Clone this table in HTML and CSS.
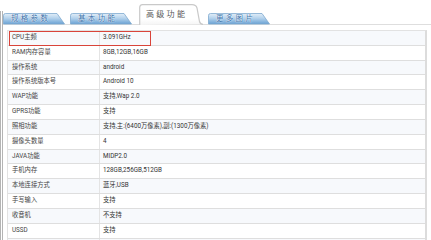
FILE: index.html
```html
<!DOCTYPE html>
<html lang="zh-CN">
<head>
<meta charset="utf-8">
<title>高级功能</title>
<link rel="stylesheet" href="styles.css">
</head>
<body>
<svg class="defs" width="0" height="0" aria-hidden="true">
  <defs>
    <linearGradient id="tabGrad" x1="0" y1="0" x2="0" y2="1">
      <stop offset="0" stop-color="#e2eef8"/>
      <stop offset="0.45" stop-color="#b4d2ec"/>
      <stop offset="1" stop-color="#6aa2d4"/>
    </linearGradient>
    <linearGradient id="activeGrad" x1="0" y1="0" x2="0" y2="1">
      <stop offset="0" stop-color="#ffffff"/>
      <stop offset="0.7" stop-color="#ffffff"/>
      <stop offset="1" stop-color="#f4f4f4"/>
    </linearGradient>
  </defs>
</svg>
<div class="frame">
  <div class="tabs">
    <div class="tab">
      <svg class="tab-bg" viewBox="0 0 62 11" preserveAspectRatio="none"><path d="M0.5,11 L0.5,2.5 Q0.5,0.5 2.5,0.5 L54,0.5 L61.5,11 Z" fill="url(#tabGrad)" stroke="#7fa9cf" stroke-width="0.8"/></svg>
      <span class="tab-text">规格参数</span>
    </div>
    <div class="tab">
      <svg class="tab-bg" viewBox="0 0 62 11" preserveAspectRatio="none"><path d="M0.5,11 L0.5,2.5 Q0.5,0.5 2.5,0.5 L54,0.5 L61.5,11 Z" fill="url(#tabGrad)" stroke="#7fa9cf" stroke-width="0.8"/></svg>
      <span class="tab-text">基本功能</span>
    </div>
    <div class="tab tab-active">
      <svg class="tab-bg" viewBox="0 0 64 21" preserveAspectRatio="none"><path d="M0.7,21 L0.7,3.5 Q0.7,0.7 3.5,0.7 L53,0.7 Q57,0.7 58,4 L60.5,17.5 Q61.3,20.3 64,20.3" fill="url(#activeGrad)" stroke="#c9c9c9" stroke-width="1.2"/></svg>
      <span class="tab-text">高级功能</span>
    </div>
    <div class="tab">
      <svg class="tab-bg" viewBox="0 0 62 11" preserveAspectRatio="none"><path d="M0.5,11 L0.5,2.5 Q0.5,0.5 2.5,0.5 L54,0.5 L61.5,11 Z" fill="url(#tabGrad)" stroke="#7fa9cf" stroke-width="0.8"/></svg>
      <span class="tab-text">更多图片</span>
    </div>
  </div>
  <div class="table">
    <div class="row hl"><div class="k">CPU主频</div><div class="v">3.091GHz</div><div class="mark"></div></div>
    <div class="row"><div class="k">RAM内存容量</div><div class="v">8GB,12GB,16GB</div></div>
    <div class="row"><div class="k">操作系统</div><div class="v">android</div></div>
    <div class="row"><div class="k">操作系统版本号</div><div class="v">Android 10</div></div>
    <div class="row"><div class="k">WAP功能</div><div class="v">支持,Wap 2.0</div></div>
    <div class="row"><div class="k">GPRS功能</div><div class="v">支持</div></div>
    <div class="row"><div class="k">照相功能</div><div class="v">支持,主:(6400万像素),副:(1300万像素)</div></div>
    <div class="row"><div class="k">摄像头数量</div><div class="v">4</div></div>
    <div class="row"><div class="k">JAVA功能</div><div class="v">MIDP2.0</div></div>
    <div class="row"><div class="k">手机内存</div><div class="v">128GB,256GB,512GB</div></div>
    <div class="row"><div class="k">本地连接方式</div><div class="v">蓝牙,USB</div></div>
    <div class="row"><div class="k">手写输入</div><div class="v">支持</div></div>
    <div class="row"><div class="k">收音机</div><div class="v">不支持</div></div>
    <div class="row"><div class="k">USSD</div><div class="v">支持</div></div>
    <div class="row"><div class="k"></div><div class="v"></div></div>
  </div>
</div>
</body>
</html>
```
FILE: styles.css
```css
html, body {
  margin: 0;
  padding: 0;
  background: #ffffff;
  overflow: hidden;
}
body {
  font-family: Roboto, "Noto Sans CJK SC", sans-serif;
  width: 431px;
  height: 240px;
}
.defs {
  position: absolute;
  width: 0;
  height: 0;
}
.frame {
  margin-top: 11px;
  border-left: 3px double #b4b4b4;
  height: 229px;
}
.tabs {
  display: flex;
  align-items: flex-end;
  gap: 5px;
  height: 13px;
  border-bottom: 1px solid #dedede;
}
.tab {
  position: relative;
  width: 62px;
  height: 11px;
  flex: none;
  display: flex;
  align-items: center;
}
.tab-bg {
  position: absolute;
  left: 0;
  top: 0;
  width: 100%;
  height: 100%;
  overflow: visible;
}
.tab-text {
  position: relative;
  padding-left: 8px;
  font-size: 7.5px;
  letter-spacing: 2.3px;
  color: #3a72aa;
  text-shadow: 0 0 1px #ffffff, 0 0 1px #ffffff;
  line-height: 11px;
}
.tab-active {
  width: 64px;
  height: 21px;
  margin-bottom: -1px;
  margin-left: 2px;
}
.tab-active .tab-text {
  color: #5a5a5a;
  text-shadow: none;
  font-size: 8px;
  letter-spacing: 2.3px;
  padding-left: 7px;
  padding-bottom: 1px;
}
.table {
  margin: 5px 4px 0 4px;
  height: 210px;
  overflow: hidden;
  border-top: 1px solid #e2e2e2;
  border-left: 1px solid #e2e2e2;
  border-right: 2px solid #dcdcdc;
}
.row {
  position: relative;
  display: grid;
  grid-template-columns: 92px 1fr;
  height: 14.83px;
  box-sizing: border-box;
  border-bottom: 1px solid #dedede;
  font-size: 6.3px;
  line-height: 13.8px;
  white-space: nowrap;
}
.row:nth-child(odd) {
  background: #f7f9fc;
}
.k {
  padding-left: 4px;
  color: #444444;
  border-right: 1px solid #e4e4e4;
}
.v {
  padding-left: 3px;
  color: #333333;
  overflow: hidden;
}
.mark {
  position: absolute;
  left: 1px;
  top: -0.5px;
  width: 142px;
  height: 15px;
  box-sizing: border-box;
  border: 1.5px solid #d9443a;
  pointer-events: none;
}
```
